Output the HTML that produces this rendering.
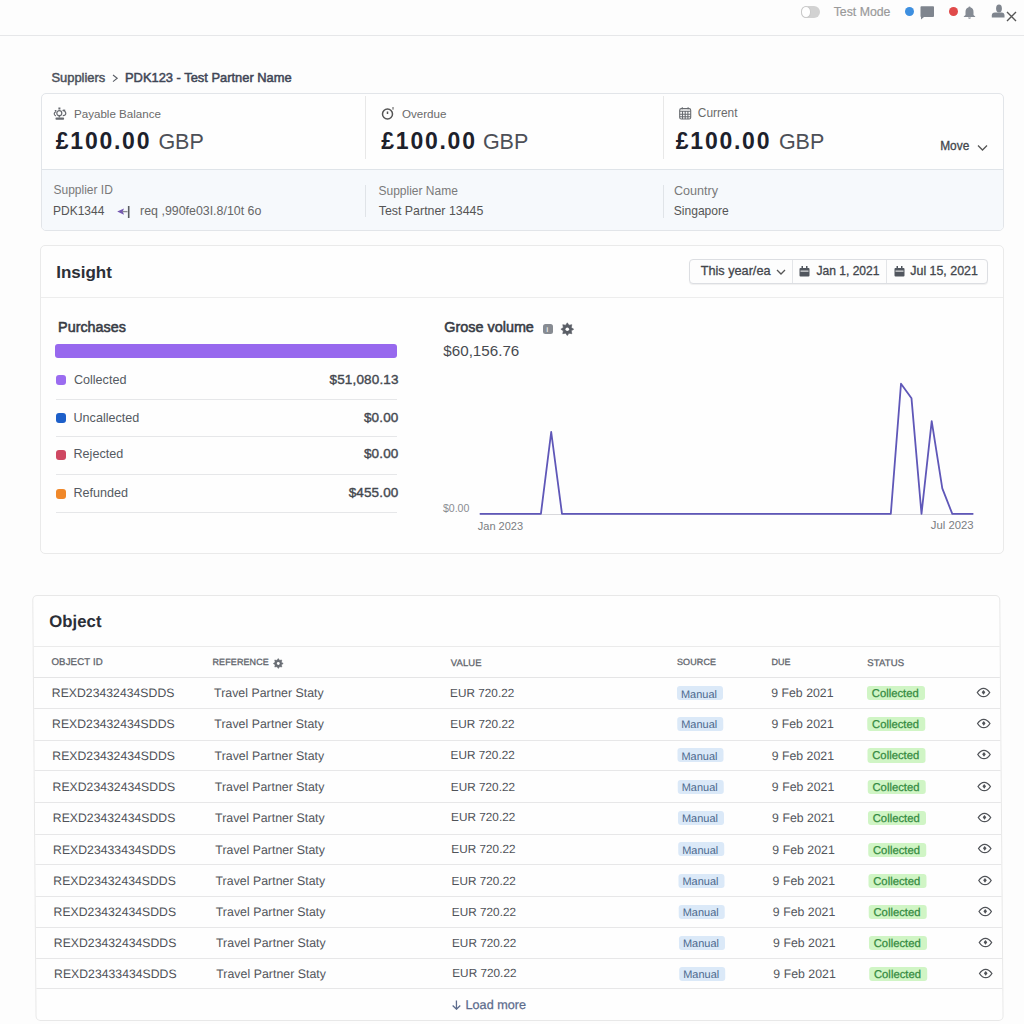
<!DOCTYPE html><html><head><meta charset="utf-8"><style>
html,body{margin:0;padding:0;}
body{width:1024px;height:1024px;position:relative;overflow:hidden;background:#fdfdfd;font-family:"Liberation Sans",sans-serif;}
.t{position:absolute;white-space:nowrap;line-height:1;}
.b{position:absolute;box-sizing:border-box;}
</style></head><body>
<div class="b" style="left:0.0px;top:0.0px;width:1024.0px;height:35.0px;background:#fdfdfd"></div>
<div class="b" style="left:0.0px;top:35.0px;width:1024.0px;height:1.0px;background:#e6e7e9"></div>
<div class="b" style="left:800.7px;top:6.0px;width:19.3px;height:11.7px;background:#d2d2d2;border-radius:6px"></div>
<div class="b" style="left:800.7px;top:6.0px;width:10.8px;height:11.7px;background:#fff;border-radius:50%;border:1px solid #c9c9c9"></div>
<div class="t" style="left:833.7px;top:6.0px;font-size:12.3px;font-weight:400;color:#9a9a9a;-webkit-text-stroke:0.2px #9a9a9a">Test Mode</div>
<div class="b" style="left:904.5px;top:6.5px;width:9.0px;height:9.0px;background:#3d8fe0;border-radius:50%"></div>
<svg class="b" style="left:919.5px;top:5.5px;" width="15" height="14" viewBox="0 0 15 14"><path d="M0.5 1.2 Q0.5 0.3 1.4 0.3 H13.2 Q14 0.3 14 1.2 V10 Q14 11 13.1 11 H4 L1 13.6 V11 Q0.5 11 0.5 10 Z" fill="#7f858e"/></svg>
<div class="b" style="left:948.5px;top:6.5px;width:9.0px;height:9.0px;background:#e04a4a;border-radius:50%"></div>
<svg class="b" style="left:963.0px;top:5.5px;" width="13" height="13" viewBox="0 0 13 13"><path d="M6.5 0.5 Q7.5 0.5 7.6 1.6 Q10.5 2.4 10.5 6 V9 L12.2 10.6 V11 H0.8 V10.6 L2.5 9 V6 Q2.5 2.4 5.4 1.6 Q5.5 0.5 6.5 0.5 Z M5 11.6 H8 Q7.8 12.8 6.5 12.8 Q5.2 12.8 5 11.6Z" fill="#858b94"/></svg>
<svg class="b" style="left:990.5px;top:3.5px;" width="14" height="14" viewBox="0 0 14 14"><ellipse cx="8" cy="4.6" rx="2.9" ry="4" fill="#7f858e"/><path d="M0.8 13.5 V11.5 Q0.8 8.6 4 8.6 H10.5 Q13.5 8.6 13.5 11.5 V13.5 Z" fill="#7f858e"/></svg>
<svg class="b" style="left:1005.5px;top:11.0px;" width="11" height="11" viewBox="0 0 11 11"><path d="M1 1 L10 10 M10 1 L1 10" stroke="#555" stroke-width="1.4"/></svg>
<div class="t" style="left:51.4px;top:71.5px;font-size:12.95px;font-weight:400;color:#4b505a;-webkit-text-stroke:0.45px #4b505a">Suppliers</div>
<svg class="b" style="left:112.0px;top:73.5px;" width="7" height="9" viewBox="0 0 7 9"><path d="M1 1 L5.2 4.3 L1 7.6" stroke="#5a5e66" stroke-width="1.1" fill="none"/></svg>
<div class="t" style="left:125.0px;top:71.6px;font-size:12.9px;font-weight:400;color:#3f4656;-webkit-text-stroke:0.5px #3f4656">PDK123 - Test Partner Name</div>
<div class="b" style="left:40.5px;top:93.0px;width:963.5px;height:137.5px;background:#fefefe;border:1px solid #e2e5e9;border-radius:5px"></div>
<div class="b" style="left:41.5px;top:168.5px;width:961.5px;height:61.0px;background:#f6f9fc;border-top:1px solid #dfe4e9;border-radius:0 0 4px 4px"></div>
<div class="b" style="left:364.5px;top:96.0px;width:1.0px;height:63.0px;background:#e8e8e8"></div>
<div class="b" style="left:662.8px;top:96.0px;width:1.0px;height:63.0px;background:#e8e8e8"></div>
<div class="b" style="left:364.9px;top:184.5px;width:1.0px;height:32.5px;background:#e0e4e8"></div>
<div class="b" style="left:662.5px;top:184.5px;width:1.0px;height:33.5px;background:#e0e4e8"></div>
<svg class="b" style="left:53.0px;top:107.0px;" width="14" height="13" viewBox="0 0 14 13"><g fill="none" stroke="#676a70" stroke-width="1.2"><circle cx="6.3" cy="6.2" r="2.5"/><path d="M3 4.5 Q1 5.5 1.2 7 Q1.5 8.5 3 8.8"/><path d="M9.6 3.5 Q12.8 3.8 12.8 6.5 Q12.6 8.6 9.8 8.6"/></g><rect x="2.5" y="10.6" width="8.6" height="2.2" rx="0.8" fill="#676a70"/><rect x="5.4" y="0.5" width="2" height="2" fill="#676a70"/><rect x="9.8" y="2.6" width="2.4" height="1.4" fill="#676a70"/><rect x="1.8" y="3" width="1.6" height="1.4" fill="#676a70"/><path d="M6.3 8.7 V10.6" stroke="#676a70" stroke-width="1.2"/></svg>
<div class="t" style="left:74.0px;top:108.2px;font-size:11.6px;font-weight:400;color:#6a6a6a;">Payable Balance</div>
<svg class="b" style="left:380.7px;top:107.0px;" width="15" height="13" viewBox="0 0 15 13"><g fill="none" stroke="#555" stroke-width="1.5"><circle cx="6.5" cy="7" r="5"/><path d="M6.5 4.5 V7"/></g><path d="M11 1 L13 1 M12 0 V3" stroke="#777" stroke-width="0.8"/></svg>
<div class="t" style="left:402.0px;top:108.2px;font-size:11.6px;font-weight:400;color:#6a6a6a;">Overdue</div>
<svg class="b" style="left:679.0px;top:107.3px;" width="13" height="13" viewBox="0 0 13 13"><g fill="none" stroke="#686b70" stroke-width="1.1"><rect x="0.7" y="1.6" width="11" height="10.4" rx="1.6"/><path d="M0.7 4.3 H11.7 M0.7 7.3 H11.7 M0.7 9.8 H11.7 M3.5 4.3 V12 M6.2 4.3 V12 M8.9 4.3 V12 M3.3 0.3 V2.3 M9.1 0.3 V2.3"/></g></svg>
<div class="t" style="left:697.8px;top:107.5px;font-size:11.9px;font-weight:400;color:#6a6a6a;">Current</div>
<div class="t" style="left:55.8px;top:130.4px;font-size:23px;font-weight:700;color:#1d212b;letter-spacing:1.75px">£100.00</div>
<div class="t" style="left:158.4px;top:132.1px;font-size:21.5px;font-weight:400;color:#4d5057;">GBP</div>
<div class="t" style="left:381.3px;top:130.4px;font-size:23px;font-weight:700;color:#1d212b;letter-spacing:1.75px">£100.00</div>
<div class="t" style="left:482.9px;top:132.1px;font-size:21.5px;font-weight:400;color:#4d5057;">GBP</div>
<div class="t" style="left:675.8px;top:130.4px;font-size:23px;font-weight:700;color:#1d212b;letter-spacing:1.75px">£100.00</div>
<div class="t" style="left:778.9px;top:132.1px;font-size:21.5px;font-weight:400;color:#4d5057;">GBP</div>
<div class="t" style="left:940.2px;top:140.6px;font-size:11.9px;font-weight:400;color:#43464c;-webkit-text-stroke:0.3px #43464c">Move</div>
<svg class="b" style="left:976.5px;top:143.5px;" width="11" height="8" viewBox="0 0 11 8"><path d="M1 1.5 L5.5 6 L10 1.5" stroke="#555" stroke-width="1.3" fill="none"/></svg>
<div class="t" style="left:53.5px;top:184.3px;font-size:12px;font-weight:400;color:#7a7a7a;">Supplier ID</div>
<div class="t" style="left:53.0px;top:205.2px;font-size:12px;font-weight:400;color:#555;">PDK1344</div>
<svg class="b" style="left:116.0px;top:205.0px;" width="15" height="14" viewBox="0 0 15 14"><path d="M1.2 6.6 L8 3.4 L6.8 6.6 L8 9.8 Z" fill="#7459b0"/><path d="M6.5 6.6 H11.5" stroke="#8a8c90" stroke-width="1.3"/><path d="M12.7 1 V13" stroke="#5a5d62" stroke-width="1.6"/></svg>
<div class="t" style="left:140.1px;top:204.9px;font-size:12.4px;font-weight:400;color:#666;">req ,990fe03I.8/10t 6o</div>
<div class="t" style="left:378.5px;top:185.3px;font-size:12px;font-weight:400;color:#7a7a7a;">Supplier Name</div>
<div class="t" style="left:378.7px;top:205.1px;font-size:12.4px;font-weight:400;color:#555;">Test Partner 13445</div>
<div class="t" style="left:673.9px;top:184.8px;font-size:12.6px;font-weight:400;color:#7a7a7a;">Country</div>
<div class="t" style="left:673.7px;top:204.8px;font-size:12.1px;font-weight:400;color:#555;">Singapore</div>
<div class="b" style="left:39.5px;top:244.5px;width:964.5px;height:309.0px;background:#fefefe;border:1px solid #eaeaea;border-radius:5px"></div>
<div class="b" style="left:40.5px;top:296.5px;width:962.5px;height:1.0px;background:#ededed"></div>
<div class="t" style="left:56.2px;top:263.6px;font-size:17px;font-weight:700;color:#2b2f37;">Insight</div>
<div class="b" style="left:688.5px;top:258.5px;width:299.0px;height:25.0px;background:#fdfdfd;border:1px solid #dcdee2;border-radius:4px;box-shadow:0 1px 1px rgba(0,0,0,0.06)"></div>
<div class="b" style="left:791.7px;top:259.5px;width:1.0px;height:23.0px;background:#e3e5e8"></div>
<div class="b" style="left:886.0px;top:259.5px;width:1.0px;height:23.0px;background:#e3e5e8"></div>
<div class="t" style="left:700.7px;top:264.5px;font-size:12.7px;font-weight:400;color:#43464c;-webkit-text-stroke:0.3px #43464c">This year/ea</div>
<svg class="b" style="left:775.5px;top:268.5px;" width="10" height="7" viewBox="0 0 10 7"><path d="M1 1 L5 5 L9 1" stroke="#555" stroke-width="1.3" fill="none"/></svg>
<svg class="b" style="left:799.0px;top:266.0px;" width="11" height="11" viewBox="0 0 11 11"><rect x="0.5" y="2" width="10" height="8.5" rx="1" fill="#51565e"/><rect x="2.5" y="0" width="1.5" height="3" fill="#51565e"/><rect x="7" y="0" width="1.5" height="3" fill="#51565e"/><rect x="1.5" y="4.6" width="8" height="1" fill="#fdfdfd"/></svg>
<div class="t" style="left:816.5px;top:265.1px;font-size:12.05px;font-weight:400;color:#43464c;-webkit-text-stroke:0.3px #43464c">Jan 1, 2021</div>
<svg class="b" style="left:893.5px;top:266.0px;" width="11" height="11" viewBox="0 0 11 11"><rect x="0.5" y="2" width="10" height="8.5" rx="1" fill="#51565e"/><rect x="2.5" y="0" width="1.5" height="3" fill="#51565e"/><rect x="7" y="0" width="1.5" height="3" fill="#51565e"/><rect x="1.5" y="4.6" width="8" height="1" fill="#fdfdfd"/></svg>
<div class="t" style="left:910.3px;top:264.8px;font-size:12.4px;font-weight:400;color:#43464c;-webkit-text-stroke:0.3px #43464c">Jul 15, 2021</div>
<div class="t" style="left:58.1px;top:320.1px;font-size:14.35px;font-weight:400;color:#383c45;-webkit-text-stroke:0.55px #383c45">Purchases</div>
<div class="b" style="left:55.4px;top:344.3px;width:341.6px;height:13.3px;background:#9768ee;border-radius:3px"></div>
<div class="b" style="left:55.6px;top:375.2px;width:10.0px;height:10.0px;background:#9b6cf0;border-radius:3px"></div>
<div class="t" style="left:73.9px;top:374.1px;font-size:12.6px;font-weight:400;color:#555a62;">Collected</div>
<div class="t" style="right:625.4px;top:373.4px;font-size:13.5px;font-weight:400;color:#44484f;text-align:right;-webkit-text-stroke:0.4px #44484f;letter-spacing:0.15px">$51,080.13</div>
<div class="b" style="left:55.6px;top:412.7px;width:10.0px;height:10.0px;background:#1d5fc9;border-radius:3px"></div>
<div class="t" style="left:73.5px;top:411.8px;font-size:12.6px;font-weight:400;color:#555a62;">Uncallected</div>
<div class="t" style="right:625.5px;top:411.1px;font-size:13.5px;font-weight:400;color:#44484f;text-align:right;-webkit-text-stroke:0.4px #44484f;letter-spacing:0.15px">$0.00</div>
<div class="b" style="left:55.6px;top:449.8px;width:10.0px;height:10.0px;background:#cf4862;border-radius:3px"></div>
<div class="t" style="left:73.5px;top:447.9px;font-size:12.6px;font-weight:400;color:#555a62;">Rejected</div>
<div class="t" style="right:625.5px;top:447.2px;font-size:13.5px;font-weight:400;color:#44484f;text-align:right;-webkit-text-stroke:0.4px #44484f;letter-spacing:0.15px">$0.00</div>
<div class="b" style="left:55.6px;top:488.7px;width:10.0px;height:10.0px;background:#f0882a;border-radius:3px"></div>
<div class="t" style="left:73.5px;top:487.0px;font-size:12.6px;font-weight:400;color:#555a62;">Refunded</div>
<div class="t" style="right:625.5px;top:486.3px;font-size:13.5px;font-weight:400;color:#44484f;text-align:right;-webkit-text-stroke:0.4px #44484f;letter-spacing:0.15px">$455.00</div>
<div class="b" style="left:55.6px;top:398.5px;width:341.9px;height:1.0px;background:#e6e7e9"></div>
<div class="b" style="left:55.6px;top:436.1px;width:341.9px;height:1.0px;background:#e6e7e9"></div>
<div class="b" style="left:55.6px;top:473.8px;width:341.9px;height:1.0px;background:#e6e7e9"></div>
<div class="b" style="left:55.6px;top:511.5px;width:341.9px;height:1.0px;background:#e6e7e9"></div>
<div class="t" style="left:444.3px;top:320.2px;font-size:14.4px;font-weight:400;color:#383c45;-webkit-text-stroke:0.55px #383c45">Grose volume</div>
<div class="b" style="left:543.0px;top:323.5px;width:10.0px;height:10.3px;background:#878b92;border-radius:2.5px"></div>
<div class="t" style="left:546.3px;top:325.6px;font-size:7.5px;font-weight:700;color:#e8e8e8;">i</div>
<svg class="b" style="left:560.0px;top:322.0px;" width="15" height="15" viewBox="0 0 15 15"><path d="M7.30,0.80 L8.95,3.23 L11.83,2.67 L11.27,5.55 L13.70,7.20 L11.27,8.85 L11.83,11.73 L8.95,11.17 L7.30,13.60 L5.65,11.17 L2.77,11.73 L3.33,8.85 L0.90,7.20 L3.33,5.55 L2.77,2.67 L5.65,3.23Z" fill="#5a5e66" stroke="#5a5e66" stroke-width="0.6" stroke-linejoin="round"/><circle cx="7.3" cy="7.2" r="1.8" fill="#fefefe"/></svg>
<div class="t" style="left:443.3px;top:343.4px;font-size:15.2px;font-weight:400;color:#474a50;">$60,156.76</div>
<div class="t" style="left:442.9px;top:503.2px;font-size:10.6px;font-weight:400;color:#8a8d92;">$0.00</div>
<div class="b" style="left:479.7px;top:514.0px;width:493.7px;height:1.0px;background:#d8d8dc"></div>
<svg class="b" style="left:0;top:0" width="1024" height="1024"><polyline points="479.7,513.9 540.9,513.9 551.2,432.0 562.0,513.9 890.8,513.9 901.0,383.7 911.5,398.3 921.5,513.9 931.7,421.2 942.3,488.4 952.3,513.9 973.4,513.9" fill="none" stroke="#5f57b8" stroke-width="1.8" stroke-linejoin="round"/></svg>
<div class="t" style="left:477.8px;top:520.5px;font-size:11px;font-weight:400;color:#7a7d82;">Jan 2023</div>
<div class="t" style="left:930.8px;top:520.1px;font-size:11.3px;font-weight:400;color:#7a7d82;">Jul 2023</div>
<div class="b" style="left:0;top:0;width:1024px;height:1024px;transform-origin:0 692px;transform:skewX(0.45deg)">
<div class="b" style="left:33.2px;top:595.3px;width:967.8px;height:426.2px;background:#fefefe;border:1px solid #e8e8e8;border-radius:5px"></div>
<div class="t" style="left:49.8px;top:614.1px;font-size:16.8px;font-weight:700;color:#2b2f37;">Object</div>
<div class="b" style="left:34.2px;top:646.3px;width:965.8px;height:1.0px;background:#ebebeb"></div>
<div class="t" style="left:51.7px;top:657.4px;font-size:9.7px;font-weight:400;color:#62666d;letter-spacing:0.1px;-webkit-text-stroke:0.3px #62666d">OBJECT ID</div>
<div class="t" style="left:212.7px;top:658.0px;font-size:9.0px;font-weight:400;color:#62666d;letter-spacing:0.1px;-webkit-text-stroke:0.3px #62666d">REFERENCE</div>
<svg class="b" style="left:272.5px;top:657.5px;" width="11" height="11" viewBox="0 0 11 11"><path d="M5.50,0.50 L6.80,2.36 L9.04,1.96 L8.64,4.20 L10.50,5.50 L8.64,6.80 L9.04,9.04 L6.80,8.64 L5.50,10.50 L4.20,8.64 L1.96,9.04 L2.36,6.80 L0.50,5.50 L2.36,4.20 L1.96,1.96 L4.20,2.36Z" fill="#6a6e75" stroke="#6a6e75" stroke-width="0.5" stroke-linejoin="round"/><circle cx="5.5" cy="5.5" r="1.4" fill="#fefefe"/></svg>
<div class="t" style="left:451.0px;top:657.6px;font-size:9.5px;font-weight:400;color:#62666d;letter-spacing:0.1px;-webkit-text-stroke:0.3px #62666d">VALUE</div>
<div class="t" style="left:677.2px;top:658.0px;font-size:9.0px;font-weight:400;color:#62666d;letter-spacing:0.1px;-webkit-text-stroke:0.3px #62666d">SOURCE</div>
<div class="t" style="left:771.6px;top:658.0px;font-size:9.0px;font-weight:400;color:#62666d;letter-spacing:0.1px;-webkit-text-stroke:0.3px #62666d">DUE</div>
<div class="t" style="left:867.5px;top:657.5px;font-size:9.6px;font-weight:400;color:#62666d;letter-spacing:0.1px;-webkit-text-stroke:0.3px #62666d">STATUS</div>
<div class="b" style="left:34.2px;top:676.8px;width:965.8px;height:1.0px;background:#e5e5e6"></div>
<div class="b" style="left:34.2px;top:707.7px;width:965.8px;height:1.0px;background:#e7e7e8"></div>
<div class="t" style="left:51.8px;top:687.4px;font-size:12.25px;font-weight:400;color:#4f5258;">REXD23432434SDDS</div>
<div class="t" style="left:214.0px;top:687.3px;font-size:12.4px;font-weight:400;color:#53565c;">Travel Partner Staty</div>
<div class="t" style="left:450.0px;top:687.8px;font-size:11.8px;font-weight:400;color:#4f5258;">EUR 720.22</div>
<div class="b" style="left:676.6px;top:686.0px;width:46.9px;height:14.1px;background:#dbe9f8;border-radius:3px"></div>
<div class="t" style="left:680.9px;top:688.5px;font-size:11px;font-weight:400;color:#4d6a8e;">Manual</div>
<div class="t" style="left:771.1px;top:687.3px;font-size:12.35px;font-weight:400;color:#53565c;">9 Feb 2021</div>
<div class="b" style="left:867.0px;top:686.1px;width:57.8px;height:14.4px;background:#d0f5c5;border-radius:3px"></div>
<div class="t" style="left:871.7px;top:688.2px;font-size:11.3px;font-weight:400;color:#338a40;-webkit-text-stroke:0.25px #338a40">Collected</div>
<svg class="b" style="left:976.0px;top:687.0px;" width="15" height="11" viewBox="0 0 15 11"><path d="M1.3 5.5 Q4 1.3 7.5 1.3 Q11 1.3 13.7 5.5 Q11 9.7 7.5 9.7 Q4 9.7 1.3 5.5 Z" fill="none" stroke="#505358" stroke-width="1.3"/><path d="M7.5 3 L9.3 5.3 L7.5 7.8 L5.7 5.3 Z" fill="#505358"/></svg>
<div class="b" style="left:34.2px;top:739.9px;width:965.8px;height:1.0px;background:#e7e7e8"></div>
<div class="t" style="left:51.8px;top:718.1px;font-size:12.25px;font-weight:400;color:#4f5258;">REXD23432434SDDS</div>
<div class="t" style="left:214.0px;top:718.0px;font-size:12.4px;font-weight:400;color:#53565c;">Travel Partner Staty</div>
<div class="t" style="left:450.0px;top:718.5px;font-size:11.8px;font-weight:400;color:#4f5258;">EUR 720.22</div>
<div class="b" style="left:676.6px;top:716.7px;width:46.9px;height:14.1px;background:#dbe9f8;border-radius:3px"></div>
<div class="t" style="left:680.9px;top:719.2px;font-size:11px;font-weight:400;color:#4d6a8e;">Manual</div>
<div class="t" style="left:771.1px;top:718.0px;font-size:12.35px;font-weight:400;color:#53565c;">9 Feb 2021</div>
<div class="b" style="left:867.0px;top:716.8px;width:57.8px;height:14.4px;background:#d0f5c5;border-radius:3px"></div>
<div class="t" style="left:871.7px;top:718.9px;font-size:11.3px;font-weight:400;color:#338a40;-webkit-text-stroke:0.25px #338a40">Collected</div>
<svg class="b" style="left:976.0px;top:717.7px;" width="15" height="11" viewBox="0 0 15 11"><path d="M1.3 5.5 Q4 1.3 7.5 1.3 Q11 1.3 13.7 5.5 Q11 9.7 7.5 9.7 Q4 9.7 1.3 5.5 Z" fill="none" stroke="#505358" stroke-width="1.3"/><path d="M7.5 3 L9.3 5.3 L7.5 7.8 L5.7 5.3 Z" fill="#505358"/></svg>
<div class="b" style="left:34.2px;top:770.3px;width:965.8px;height:1.0px;background:#e7e7e8"></div>
<div class="t" style="left:51.8px;top:749.6px;font-size:12.25px;font-weight:400;color:#4f5258;">REXD23432434SDDS</div>
<div class="t" style="left:214.0px;top:749.5px;font-size:12.4px;font-weight:400;color:#53565c;">Travel Partner Staty</div>
<div class="t" style="left:450.0px;top:750.0px;font-size:11.8px;font-weight:400;color:#4f5258;">EUR 720.22</div>
<div class="b" style="left:676.6px;top:748.2px;width:46.9px;height:14.1px;background:#dbe9f8;border-radius:3px"></div>
<div class="t" style="left:680.9px;top:750.7px;font-size:11px;font-weight:400;color:#4d6a8e;">Manual</div>
<div class="t" style="left:771.1px;top:749.5px;font-size:12.35px;font-weight:400;color:#53565c;">9 Feb 2021</div>
<div class="b" style="left:867.0px;top:748.3px;width:57.8px;height:14.4px;background:#d0f5c5;border-radius:3px"></div>
<div class="t" style="left:871.7px;top:750.4px;font-size:11.3px;font-weight:400;color:#338a40;-webkit-text-stroke:0.25px #338a40">Collected</div>
<svg class="b" style="left:976.0px;top:749.2px;" width="15" height="11" viewBox="0 0 15 11"><path d="M1.3 5.5 Q4 1.3 7.5 1.3 Q11 1.3 13.7 5.5 Q11 9.7 7.5 9.7 Q4 9.7 1.3 5.5 Z" fill="none" stroke="#505358" stroke-width="1.3"/><path d="M7.5 3 L9.3 5.3 L7.5 7.8 L5.7 5.3 Z" fill="#505358"/></svg>
<div class="b" style="left:34.2px;top:801.5px;width:965.8px;height:1.0px;background:#e7e7e8"></div>
<div class="t" style="left:51.8px;top:781.3px;font-size:12.25px;font-weight:400;color:#4f5258;">REXD23432434SDDS</div>
<div class="t" style="left:214.0px;top:781.2px;font-size:12.4px;font-weight:400;color:#53565c;">Travel Partner Staty</div>
<div class="t" style="left:450.0px;top:781.7px;font-size:11.8px;font-weight:400;color:#4f5258;">EUR 720.22</div>
<div class="b" style="left:676.6px;top:779.9px;width:46.9px;height:14.1px;background:#dbe9f8;border-radius:3px"></div>
<div class="t" style="left:680.9px;top:782.4px;font-size:11px;font-weight:400;color:#4d6a8e;">Manual</div>
<div class="t" style="left:771.1px;top:781.2px;font-size:12.35px;font-weight:400;color:#53565c;">9 Feb 2021</div>
<div class="b" style="left:867.0px;top:780.0px;width:57.8px;height:14.4px;background:#d0f5c5;border-radius:3px"></div>
<div class="t" style="left:871.7px;top:782.1px;font-size:11.3px;font-weight:400;color:#338a40;-webkit-text-stroke:0.25px #338a40">Collected</div>
<svg class="b" style="left:976.0px;top:780.9px;" width="15" height="11" viewBox="0 0 15 11"><path d="M1.3 5.5 Q4 1.3 7.5 1.3 Q11 1.3 13.7 5.5 Q11 9.7 7.5 9.7 Q4 9.7 1.3 5.5 Z" fill="none" stroke="#505358" stroke-width="1.3"/><path d="M7.5 3 L9.3 5.3 L7.5 7.8 L5.7 5.3 Z" fill="#505358"/></svg>
<div class="b" style="left:34.2px;top:834.1px;width:965.8px;height:1.0px;background:#e7e7e8"></div>
<div class="t" style="left:51.8px;top:812.0px;font-size:12.25px;font-weight:400;color:#4f5258;">REXD23432434SDDS</div>
<div class="t" style="left:214.0px;top:811.9px;font-size:12.4px;font-weight:400;color:#53565c;">Travel Partner Staty</div>
<div class="t" style="left:450.0px;top:812.4px;font-size:11.8px;font-weight:400;color:#4f5258;">EUR 720.22</div>
<div class="b" style="left:676.6px;top:810.6px;width:46.9px;height:14.1px;background:#dbe9f8;border-radius:3px"></div>
<div class="t" style="left:680.9px;top:813.1px;font-size:11px;font-weight:400;color:#4d6a8e;">Manual</div>
<div class="t" style="left:771.1px;top:811.9px;font-size:12.35px;font-weight:400;color:#53565c;">9 Feb 2021</div>
<div class="b" style="left:867.0px;top:810.7px;width:57.8px;height:14.4px;background:#d0f5c5;border-radius:3px"></div>
<div class="t" style="left:871.7px;top:812.8px;font-size:11.3px;font-weight:400;color:#338a40;-webkit-text-stroke:0.25px #338a40">Collected</div>
<svg class="b" style="left:976.0px;top:811.6px;" width="15" height="11" viewBox="0 0 15 11"><path d="M1.3 5.5 Q4 1.3 7.5 1.3 Q11 1.3 13.7 5.5 Q11 9.7 7.5 9.7 Q4 9.7 1.3 5.5 Z" fill="none" stroke="#505358" stroke-width="1.3"/><path d="M7.5 3 L9.3 5.3 L7.5 7.8 L5.7 5.3 Z" fill="#505358"/></svg>
<div class="b" style="left:34.2px;top:864.4px;width:965.8px;height:1.0px;background:#e7e7e8"></div>
<div class="t" style="left:51.8px;top:843.8px;font-size:12.25px;font-weight:400;color:#4f5258;">REXD23433434SDDS</div>
<div class="t" style="left:214.0px;top:843.7px;font-size:12.4px;font-weight:400;color:#53565c;">Travel Partner Staty</div>
<div class="t" style="left:450.0px;top:844.2px;font-size:11.8px;font-weight:400;color:#4f5258;">EUR 720.22</div>
<div class="b" style="left:676.6px;top:842.4px;width:46.9px;height:14.1px;background:#dbe9f8;border-radius:3px"></div>
<div class="t" style="left:680.9px;top:844.9px;font-size:11px;font-weight:400;color:#4d6a8e;">Manual</div>
<div class="t" style="left:771.1px;top:843.7px;font-size:12.35px;font-weight:400;color:#53565c;">9 Feb 2021</div>
<div class="b" style="left:867.0px;top:842.5px;width:57.8px;height:14.4px;background:#d0f5c5;border-radius:3px"></div>
<div class="t" style="left:871.7px;top:844.6px;font-size:11.3px;font-weight:400;color:#338a40;-webkit-text-stroke:0.25px #338a40">Collected</div>
<svg class="b" style="left:976.0px;top:843.4px;" width="15" height="11" viewBox="0 0 15 11"><path d="M1.3 5.5 Q4 1.3 7.5 1.3 Q11 1.3 13.7 5.5 Q11 9.7 7.5 9.7 Q4 9.7 1.3 5.5 Z" fill="none" stroke="#505358" stroke-width="1.3"/><path d="M7.5 3 L9.3 5.3 L7.5 7.8 L5.7 5.3 Z" fill="#505358"/></svg>
<div class="b" style="left:34.2px;top:896.0px;width:965.8px;height:1.0px;background:#e7e7e8"></div>
<div class="t" style="left:51.8px;top:875.3px;font-size:12.25px;font-weight:400;color:#4f5258;">REXD23432434SDDS</div>
<div class="t" style="left:214.0px;top:875.2px;font-size:12.4px;font-weight:400;color:#53565c;">Travel Partner Staty</div>
<div class="t" style="left:450.0px;top:875.7px;font-size:11.8px;font-weight:400;color:#4f5258;">EUR 720.22</div>
<div class="b" style="left:676.6px;top:873.9px;width:46.9px;height:14.1px;background:#dbe9f8;border-radius:3px"></div>
<div class="t" style="left:680.9px;top:876.4px;font-size:11px;font-weight:400;color:#4d6a8e;">Manual</div>
<div class="t" style="left:771.1px;top:875.2px;font-size:12.35px;font-weight:400;color:#53565c;">9 Feb 2021</div>
<div class="b" style="left:867.0px;top:874.0px;width:57.8px;height:14.4px;background:#d0f5c5;border-radius:3px"></div>
<div class="t" style="left:871.7px;top:876.1px;font-size:11.3px;font-weight:400;color:#338a40;-webkit-text-stroke:0.25px #338a40">Collected</div>
<svg class="b" style="left:976.0px;top:874.9px;" width="15" height="11" viewBox="0 0 15 11"><path d="M1.3 5.5 Q4 1.3 7.5 1.3 Q11 1.3 13.7 5.5 Q11 9.7 7.5 9.7 Q4 9.7 1.3 5.5 Z" fill="none" stroke="#505358" stroke-width="1.3"/><path d="M7.5 3 L9.3 5.3 L7.5 7.8 L5.7 5.3 Z" fill="#505358"/></svg>
<div class="b" style="left:34.2px;top:926.8px;width:965.8px;height:1.0px;background:#e7e7e8"></div>
<div class="t" style="left:51.8px;top:906.1px;font-size:12.25px;font-weight:400;color:#4f5258;">REXD23432434SDDS</div>
<div class="t" style="left:214.0px;top:906.0px;font-size:12.4px;font-weight:400;color:#53565c;">Travel Partner Staty</div>
<div class="t" style="left:450.0px;top:906.5px;font-size:11.8px;font-weight:400;color:#4f5258;">EUR 720.22</div>
<div class="b" style="left:676.6px;top:904.7px;width:46.9px;height:14.1px;background:#dbe9f8;border-radius:3px"></div>
<div class="t" style="left:680.9px;top:907.2px;font-size:11px;font-weight:400;color:#4d6a8e;">Manual</div>
<div class="t" style="left:771.1px;top:906.0px;font-size:12.35px;font-weight:400;color:#53565c;">9 Feb 2021</div>
<div class="b" style="left:867.0px;top:904.8px;width:57.8px;height:14.4px;background:#d0f5c5;border-radius:3px"></div>
<div class="t" style="left:871.7px;top:906.9px;font-size:11.3px;font-weight:400;color:#338a40;-webkit-text-stroke:0.25px #338a40">Collected</div>
<svg class="b" style="left:976.0px;top:905.7px;" width="15" height="11" viewBox="0 0 15 11"><path d="M1.3 5.5 Q4 1.3 7.5 1.3 Q11 1.3 13.7 5.5 Q11 9.7 7.5 9.7 Q4 9.7 1.3 5.5 Z" fill="none" stroke="#505358" stroke-width="1.3"/><path d="M7.5 3 L9.3 5.3 L7.5 7.8 L5.7 5.3 Z" fill="#505358"/></svg>
<div class="b" style="left:34.2px;top:957.5px;width:965.8px;height:1.0px;background:#e7e7e8"></div>
<div class="t" style="left:51.8px;top:937.3px;font-size:12.25px;font-weight:400;color:#4f5258;">REXD23432434SDDS</div>
<div class="t" style="left:214.0px;top:937.2px;font-size:12.4px;font-weight:400;color:#53565c;">Travel Partner Staty</div>
<div class="t" style="left:450.0px;top:937.7px;font-size:11.8px;font-weight:400;color:#4f5258;">EUR 720.22</div>
<div class="b" style="left:676.6px;top:935.9px;width:46.9px;height:14.1px;background:#dbe9f8;border-radius:3px"></div>
<div class="t" style="left:680.9px;top:938.4px;font-size:11px;font-weight:400;color:#4d6a8e;">Manual</div>
<div class="t" style="left:771.1px;top:937.2px;font-size:12.35px;font-weight:400;color:#53565c;">9 Feb 2021</div>
<div class="b" style="left:867.0px;top:936.0px;width:57.8px;height:14.4px;background:#d0f5c5;border-radius:3px"></div>
<div class="t" style="left:871.7px;top:938.1px;font-size:11.3px;font-weight:400;color:#338a40;-webkit-text-stroke:0.25px #338a40">Collected</div>
<svg class="b" style="left:976.0px;top:936.9px;" width="15" height="11" viewBox="0 0 15 11"><path d="M1.3 5.5 Q4 1.3 7.5 1.3 Q11 1.3 13.7 5.5 Q11 9.7 7.5 9.7 Q4 9.7 1.3 5.5 Z" fill="none" stroke="#505358" stroke-width="1.3"/><path d="M7.5 3 L9.3 5.3 L7.5 7.8 L5.7 5.3 Z" fill="#505358"/></svg>
<div class="b" style="left:34.2px;top:988.3px;width:965.8px;height:1.0px;background:#e7e7e8"></div>
<div class="t" style="left:51.8px;top:968.0px;font-size:12.25px;font-weight:400;color:#4f5258;">REXD23433434SDDS</div>
<div class="t" style="left:214.0px;top:967.9px;font-size:12.4px;font-weight:400;color:#53565c;">Travel Partner Staty</div>
<div class="t" style="left:450.0px;top:968.4px;font-size:11.8px;font-weight:400;color:#4f5258;">EUR 720.22</div>
<div class="b" style="left:676.6px;top:966.6px;width:46.9px;height:14.1px;background:#dbe9f8;border-radius:3px"></div>
<div class="t" style="left:680.9px;top:969.1px;font-size:11px;font-weight:400;color:#4d6a8e;">Manual</div>
<div class="t" style="left:771.1px;top:967.9px;font-size:12.35px;font-weight:400;color:#53565c;">9 Feb 2021</div>
<div class="b" style="left:867.0px;top:966.7px;width:57.8px;height:14.4px;background:#d0f5c5;border-radius:3px"></div>
<div class="t" style="left:871.7px;top:968.8px;font-size:11.3px;font-weight:400;color:#338a40;-webkit-text-stroke:0.25px #338a40">Collected</div>
<svg class="b" style="left:976.0px;top:967.6px;" width="15" height="11" viewBox="0 0 15 11"><path d="M1.3 5.5 Q4 1.3 7.5 1.3 Q11 1.3 13.7 5.5 Q11 9.7 7.5 9.7 Q4 9.7 1.3 5.5 Z" fill="none" stroke="#505358" stroke-width="1.3"/><path d="M7.5 3 L9.3 5.3 L7.5 7.8 L5.7 5.3 Z" fill="#505358"/></svg>
<svg class="b" style="left:449.0px;top:1000.0px;" width="10" height="10" viewBox="0 0 10 10"><path d="M5 0.5 V9 M1.2 5.5 L5 9.2 L8.8 5.5" stroke="#5c6b8c" stroke-width="1.3" fill="none"/></svg>
<div class="t" style="left:463.0px;top:998.5px;font-size:12.7px;font-weight:400;color:#5c6b8c;-webkit-text-stroke:0.25px #5c6b8c">Load more</div>
</div>
</body></html>
